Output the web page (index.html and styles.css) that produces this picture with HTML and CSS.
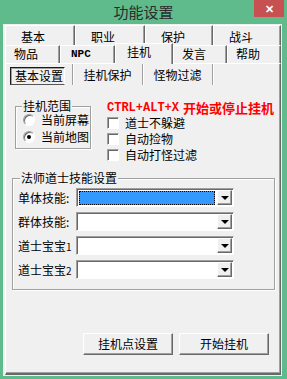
FILE: index.html
```html
<!DOCTYPE html>
<html>
<head>
    <title>功能设置</title>
    <link rel="stylesheet" href="styles.css">
</head>
<body>
    <div id="window">
        <div id="titleBar">
            <div class="titleSpacer"></div>
            <div class="titleText">功能设置</div>
            <div class="closeButton">✕</div>
        </div>
        <div id="client">
            <div class="tabRow backRow">
                <div class="tab" style="width: 70px">基本</div>
                <div class="tab" style="width: 70px">职业</div>
                <div class="tab" style="width: 68px">保护</div>
                <div class="tab" style="width: 68px">战斗</div>
            </div>
            <div class="tabRow frontRow">
                <div class="tab" style="width: 55px">物品</div>
                <div class="tab npc" style="width: 55px">NPC</div>
                <div class="tab selected" style="width: 58px">挂机</div>
                <div class="tab" style="width: 54px">发言</div>
                <div class="tab" style="width: 54px">帮助</div>
            </div>
            <div class="page">
                <div class="subTabs">
                    <div class="subTab current"><span class="focusBox">基本设置</span></div>
                    <div class="subTab">挂机保护</div>
                    <div class="subTab">怪物过滤</div>
                </div>
                <div class="subPage">
                    <div class="topRow">
                        <div class="group rangeGroup">
                            <div class="legend">挂机范围</div>
                            <div class="groupBody">
                                <div class="option"><span class="radio"></span>当前屏幕</div>
                                <div class="option"><span class="radio checked"></span>当前地图</div>
                            </div>
                        </div>
                        <div class="rightColumn">
                            <div class="hotkey"><span class="keys">CTRL+ALT+X</span><span class="hint">开始或停止挂机</span></div>
                            <div class="option check"><span class="checkbox"></span>道士不躲避</div>
                            <div class="option check"><span class="checkbox"></span>自动捡物</div>
                            <div class="option check"><span class="checkbox"></span>自动打怪过滤</div>
                        </div>
                    </div>
                    <div class="group skillGroup">
                        <div class="legend">法师道士技能设置</div>
                        <div class="groupBody">
                            <div class="field">
                                <div class="fieldLabel">单体技能:</div>
                                <div class="combo"><div class="comboValue active"></div><div class="comboArrow"></div></div>
                            </div>
                            <div class="field">
                                <div class="fieldLabel">群体技能:</div>
                                <div class="combo"><div class="comboValue"></div><div class="comboArrow"></div></div>
                            </div>
                            <div class="field">
                                <div class="fieldLabel">道士宝宝<small>1</small></div>
                                <div class="combo"><div class="comboValue"></div><div class="comboArrow"></div></div>
                            </div>
                            <div class="field">
                                <div class="fieldLabel">道士宝宝<small>2</small></div>
                                <div class="combo"><div class="comboValue"></div><div class="comboArrow"></div></div>
                            </div>
                        </div>
                    </div>
                    <div class="buttons">
                        <div class="button">挂机点设置</div>
                        <div class="button">开始挂机</div>
                    </div>
                </div>
            </div>
        </div>
    </div>
</body>
</html>
```
FILE: styles.css
```css
html, body {
    padding: 0;
    margin: 0;
    font-family: "Noto Sans CJK SC", "Liberation Sans", sans-serif;
    font-size: 12px;
    color: #000;
}
#window {
    width: 287px;
    height: 379px;
    background: #5fba8c;
    display: flex;
    flex-direction: column;
}
#titleBar {
    height: 24px;
    display: flex;
    flex-direction: row;
}
.titleSpacer {
    width: 33px;
}
.titleText {
    flex: 1;
    text-align: center;
    font-size: 15px;
    line-height: 24px;
    color: #2b2b2b;
}
.closeButton {
    width: 30px;
    height: 17px;
    margin-right: 3px;
    background: #c75050;
    color: white;
    font-size: 11px;
    font-weight: bold;
    line-height: 17px;
    text-align: center;
}
#client {
    width: 279px;
    height: 352px;
    margin-left: 3px;
    box-sizing: border-box;
    padding: 1px 1px 1px 2px;
    background: #f0f0f0;
    display: flex;
    flex-direction: column;
}
.tabRow {
    display: flex;
    flex-direction: row;
}
.tab {
    box-sizing: border-box;
    border-top: 1px solid #fff;
    border-left: 1px solid #fff;
    border-right: 1px solid #696969;
    box-shadow: inset -1px 0 #a0a0a0;
    line-height: 16px;
    white-space: nowrap;
    background: #f0f0f0;
}
.backRow .tab {
    height: 20px;
    padding: 3px 0 0 15px;
}
.frontRow .tab {
    height: 18px;
    padding-left: 8px;
}
.tab.npc {
    font-family: "Liberation Mono", monospace;
    font-weight: bold;
    font-size: 11px;
    padding-left: 10px;
}
.frontRow .tab.selected {
    height: 21px;
    margin-top: -2px;
    margin-bottom: -1px;
    padding-left: 11px;
    position: relative;
    z-index: 1;
}
.page {
    flex: 1;
    display: flex;
    flex-direction: column;
    border-top: 1px solid #fff;
    border-left: 1px solid #fff;
    border-right: 1px solid #696969;
    border-bottom: 2px solid #696969;
    box-shadow: inset -1px -1px #a0a0a0;
}
.subTabs {
    height: 21px;
    display: flex;
    flex-direction: row;
}
.subTab {
    width: 70px;
    box-sizing: border-box;
    border-right: 1px solid #a0a0a0;
    box-shadow: 1px 0 #fff;
    text-align: center;
    line-height: 21px;
}
.subTab.current {
    width: 67px;
    padding: 3px 0 0 4px;
}
.focusBox {
    display: block;
    width: 55px;
    height: 18px;
    box-sizing: border-box;
    border-top: 1px solid #1a1a1a;
    border-left: 1px solid #1a1a1a;
    border-bottom: 1px solid #555;
    border-right: 1px solid #fff;
    box-shadow: inset 1px 1px #a0a0a0;
    line-height: 16px;
    padding-left: 3px;
}
.subPage {
    flex: 1;
    display: flex;
    flex-direction: column;
}
.topRow {
    display: flex;
    flex-direction: row;
    align-items: flex-start;
}
.group {
    box-sizing: border-box;
    border: 1px solid #a0a0a0;
    box-shadow: inset 1px 1px #fff, 1px 1px #fff;
}
.legend {
    width: fit-content;
    margin: -7px 0 -5px 6px;
    padding: 0 1px;
    line-height: 12px;
    background: #f0f0f0;
}
.rangeGroup {
    width: 76px;
    height: 43px;
    margin: 21px 0 0 9px;
}
.rangeGroup .groupBody {
    padding: 4px 0 0 7px;
}
.option {
    height: 17px;
    line-height: 12px;
    display: flex;
    flex-direction: row;
    align-items: center;
    white-space: nowrap;
}
.option.check {
    height: 16px;
}
.radio {
    width: 12px;
    height: 12px;
    box-sizing: border-box;
    border-radius: 50%;
    border: 1px solid #a0a0a0;
    border-right-color: #fff;
    border-bottom-color: #fff;
    box-shadow: inset 1px 1px #696969;
    background: #fff;
    margin-right: 6px;
    display: flex;
    align-items: center;
    justify-content: center;
}
.radio.checked::after {
    content: "";
    width: 4px;
    height: 4px;
    border-radius: 50%;
    background: #000;
}
.rightColumn {
    margin: 16px 0 0 16px;
}
.hotkey {
    height: 14px;
    line-height: 14px;
    color: #f00;
    font-weight: bold;
    white-space: nowrap;
    display: flex;
}
.keys {
    font-family: "Liberation Mono", monospace;
    font-size: 12px;
}
.hint {
    font-size: 13px;
    margin-left: 4px;
}
.checkbox {
    width: 12px;
    height: 12px;
    box-sizing: border-box;
    border: 1px solid #a0a0a0;
    border-right-color: #fff;
    border-bottom-color: #fff;
    box-shadow: inset 1px 1px #696969;
    background: #fff;
    margin-right: 6px;
}
.skillGroup {
    width: 263px;
    margin: 15px 0 0 6px;
}
.skillGroup .legend {
    margin-left: 7px;
}
.skillGroup .groupBody {
    padding: 9px 0 10px 5px;
    display: flex;
    flex-direction: column;
    gap: 5px;
}
.field {
    display: flex;
    flex-direction: row;
    align-items: center;
}
.fieldLabel {
    width: 58px;
    white-space: nowrap;
}
.fieldLabel small {
    font-size: 10px;
}
.combo {
    width: 158px;
    height: 19px;
    box-sizing: border-box;
    border: 1px solid #a0a0a0;
    border-right-color: #fff;
    border-bottom-color: #fff;
    box-shadow: inset 1px 1px #696969;
    background: #fff;
    padding: 2px 1px 1px 2px;
    display: flex;
    flex-direction: row;
    gap: 2px;
}
.comboValue {
    flex: 1;
}
.comboValue.active {
    background: #3399ff;
    outline: 1px dotted #000;
    outline-offset: -1px;
}
.comboArrow {
    width: 15px;
    box-sizing: border-box;
    margin: -1px 0 0 0;
    background: #f0f0f0;
    border: 1px solid #fff;
    border-right-color: #696969;
    border-bottom-color: #696969;
    box-shadow: inset -1px -1px #a0a0a0;
    display: flex;
    align-items: center;
    justify-content: center;
}
.comboArrow::after {
    content: "";
    border-left: 4px solid transparent;
    border-right: 4px solid transparent;
    border-top: 4px solid #000;
}
.buttons {
    display: flex;
    flex-direction: row;
    justify-content: flex-end;
    gap: 6px;
    margin-top: 43px;
    padding-right: 11px;
}
.button {
    width: 90px;
    height: 22px;
    box-sizing: border-box;
    background: #f0f0f0;
    border: 1px solid #fff;
    border-right-color: #696969;
    border-bottom-color: #696969;
    box-shadow: inset -1px -1px #a0a0a0;
    text-align: center;
    line-height: 20px;
}
```
